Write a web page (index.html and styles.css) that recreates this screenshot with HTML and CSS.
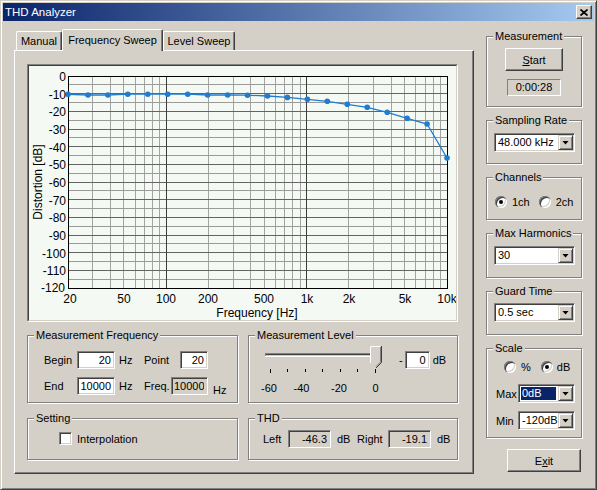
FILE: index.html
```html
<!DOCTYPE html>
<html lang="en">
<head>
  <meta charset="UTF-8" />
  <title>THD Analyzer</title>
  <link rel="stylesheet" href="styles.css">
</head>
<body>
  <div class="window">
    <div class="titlebar">
      <span class="title">THD Analyzer</span>
      <span class="close">
        <svg width="8" height="7" viewBox="0 0 8 7"><path d="M0.5 0.5L7.5 6.5M7.5 0.5L0.5 6.5" stroke="#000" stroke-width="1.7"/></svg>
      </span>
    </div>

    <div class="client">
      <div class="main">
        <div class="tabs">
          <div class="tab tab-manual">Manual</div>
          <div class="tab tab-freq active">Frequency Sweep</div>
          <div class="tab tab-level">Level Sweep</div>
        </div>

        <div class="panel">
          <div class="chart">
            <svg class="plot" width="427" height="254" viewBox="29 66 427 254">
              <g shape-rendering="crispEdges" fill="none">
                <path class="grid-v" d="M92.5 76V288M110.5 76V288M123.5 76V288M135.5 76V288M144.5 76V288M152.5 76V288M159.5 76V288M208.5 76V288M233.5 76V288M250.5 76V288M264.5 76V288M275.5 76V288M284.5 76V288M292.5 76V288M300.5 76V288M348.5 76V288M373.5 76V288M391.5 76V288M404.5 76V288M415.5 76V288M425.5 76V288M433.5 76V288M440.5 76V288"/>
                <path class="grid-minor" d="M68 84.5H447M68 102.5H447M68 120.5H447M68 137.5H447M68 155.5H447M68 173.5H447M68 190.5H447M68 208.5H447M68 226.5H447M68 243.5H447M68 261.5H447M68 279.5H447"/>
                <path class="grid-major" d="M68 93.5H447M68 111.5H447M68 129.5H447M68 146.5H447M68 164.5H447M68 182.5H447M68 199.5H447M68 217.5H447M68 235.5H447M68 252.5H447M68 270.5H447"/>
                <path class="grid-decade" d="M166.5 76V288M306.5 76V288"/>
                <rect class="frame" x="68.5" y="76.5" width="379" height="212"/>
              </g>

              <polyline class="curve" points="68,94.3 88,95 107.9,95 127.8,94.2 147.8,94.2 167.7,94.2 187.7,94.2 207.6,95 227.6,95 247.5,95.2 267.5,96 287.4,97.4 307.4,99.3 327.3,101.3 347.3,104.3 367.2,107.3 387.2,112.3 407.1,118.3 427.1,124 447,158"/>
              <g class="dots">
                <circle cx="68" cy="94.3" r="2.8"/><circle cx="88" cy="95" r="2.8"/>
                <circle cx="107.9" cy="95" r="2.8"/><circle cx="127.8" cy="94.2" r="2.8"/>
                <circle cx="147.8" cy="94.2" r="2.8"/><circle cx="167.7" cy="94.2" r="2.8"/>
                <circle cx="187.7" cy="94.2" r="2.8"/><circle cx="207.6" cy="95" r="2.8"/>
                <circle cx="227.6" cy="95" r="2.8"/><circle cx="247.5" cy="95.2" r="2.8"/>
                <circle cx="267.5" cy="96" r="2.8"/><circle cx="287.4" cy="97.4" r="2.8"/>
                <circle cx="307.4" cy="99.3" r="2.8"/><circle cx="327.3" cy="101.3" r="2.8"/>
                <circle cx="347.3" cy="104.3" r="2.8"/><circle cx="367.2" cy="107.3" r="2.8"/>
                <circle cx="387.2" cy="112.3" r="2.8"/><circle cx="407.1" cy="118.3" r="2.8"/>
                <circle cx="427.1" cy="124" r="2.8"/><circle cx="447" cy="158" r="2.8"/>
              </g>

              <g class="ylabels" text-anchor="end">
                <text x="66" y="81">0</text>
                <text x="66" y="98.7">-10</text>
                <text x="66" y="116.3">-20</text>
                <text x="66" y="134">-30</text>
                <text x="66" y="151.7">-40</text>
                <text x="66" y="169.3">-50</text>
                <text x="66" y="187">-60</text>
                <text x="66" y="204.7">-70</text>
                <text x="66" y="222.3">-80</text>
                <text x="66" y="240">-90</text>
                <text x="66" y="257.7">-100</text>
                <text x="66" y="275.3">-110</text>
                <text x="65" y="292">-120</text>
              </g>
              <g class="xlabels" text-anchor="middle">
                <text x="70" y="303">20</text>
                <text x="124" y="302.5">50</text>
                <text x="166" y="302.5">100</text>
                <text x="208" y="302.5">200</text>
                <text x="264" y="302.5">500</text>
                <text x="307" y="302.5">1k</text>
                <text x="349" y="302.5">2k</text>
                <text x="405" y="302.5">5k</text>
                <text x="447" y="302.5">10k</text>
              </g>
              <text class="axis-title" x="257" y="317" text-anchor="middle">Frequency [Hz]</text>
              <text class="axis-title" transform="translate(41.5 182) rotate(-90)" text-anchor="middle">Distortion [dB]</text>
            </svg>
          </div>

          <div class="groups">
            <div class="group">
              <div class="group-title">Measurement Frequency</div>
              <div class="freq-rows">
                <div class="row">
                  <span class="lbl lbl-begin">Begin</span>
                  <input class="field f-hz" value="20">
                  <span class="unit">Hz</span>
                  <span class="lbl lbl-point">Point</span>
                  <input class="field f-point" value="20">
                </div>
                <div class="row">
                  <span class="lbl lbl-begin">End</span>
                  <input class="field f-hz" value="10000">
                  <span class="unit">Hz</span>
                  <span class="lbl lbl-freq">Freq.</span>
                  <input class="field readonly f-freq" value="10000" readonly>
                  <span class="unit-low">Hz</span>
                </div>
              </div>
            </div>

            <div class="group">
              <div class="group-title">Measurement Level</div>
              <div class="level-row">
                <svg class="slider" width="132" height="50" viewBox="258 344 132 50">
                  <g shape-rendering="crispEdges">
                    <path d="M265 353.5H380M265 353.5V357" stroke="#808080"/>
                    <path d="M266 354.5H379" stroke="#404040"/>
                    <path d="M266 355.5H379" stroke="#d4d0c8"/>
                    <path d="M265 356.5H380M380.5 353V357" stroke="#fff"/>
                    <path d="M270.5 369V373M287.5 369V372M305.5 369V372M322.5 369V372M340.5 369V372M357.5 369V372M375.5 369V373" stroke="#000"/>
                  </g>
                  <polygon points="370,346 381,346 381,362 376,367 370,362" fill="#d4d0c8"/>
                  <path d="M370.5 363V346.5H380.5" stroke="#fff" fill="none"/>
                  <path d="M381.5 346V362.5L376 368" stroke="#404040" fill="none"/>
                  <path d="M380.5 347V362L376 366.5" stroke="#808080" fill="none"/>
                  <g class="ticklabels">
                    <text x="261" y="392">-60</text>
                    <text x="293.5" y="392">-40</text>
                    <text x="331" y="392">-20</text>
                    <text x="372.5" y="392">0</text>
                  </g>
                </svg>
                <span class="level-minus">-</span>
                <input class="field f-level" value="0">
                <span class="level-unit">dB</span>
              </div>
            </div>

            <div class="group">
              <div class="group-title">Setting</div>
              <div class="check-row">
                <span class="checkbox"></span>
                <span class="check-label">Interpolation</span>
              </div>
            </div>

            <div class="group">
              <div class="group-title">THD</div>
              <div class="row thd-row">
                <span class="lbl lbl-left">Left</span>
                <input class="field readonly f-thd" value="-46.3" readonly>
                <span class="unit unit-thd">dB</span>
                <span class="lbl lbl-right">Right</span>
                <input class="field readonly f-thd" value="-19.1" readonly>
                <span class="unit unit-thd">dB</span>
              </div>
            </div>
          </div>
        </div>
      </div>

      <div class="side">
        <div class="group g-meas">
          <div class="group-title">Measurement</div>
          <div class="btn btn-start"><span><u>S</u>tart</span></div>
          <div class="static time">0:00:28</div>
        </div>

        <div class="group g-rate">
          <div class="group-title">Sampling Rate</div>
          <div class="combo combo-wide"><span class="combo-text">48.000 kHz</span><span class="combo-btn"></span></div>
        </div>

        <div class="group g-ch">
          <div class="group-title">Channels</div>
          <div class="radio-row">
            <span class="radio on"></span><span class="radio-label">1ch</span>
            <span class="radio radio-2"></span><span class="radio-label">2ch</span>
          </div>
        </div>

        <div class="group g-harm">
          <div class="group-title">Max Harmonics</div>
          <div class="combo combo-wide"><span class="combo-text">30</span><span class="combo-btn"></span></div>
        </div>

        <div class="group g-guard">
          <div class="group-title">Guard Time</div>
          <div class="combo combo-wide combo-guard"><span class="combo-text">0.5 sec</span><span class="combo-btn"></span></div>
        </div>

        <div class="group g-scale">
          <div class="group-title">Scale</div>
          <div class="radio-row scale-radios">
            <span class="radio"></span><span class="radio-label">%</span>
            <span class="radio on radio-db"></span><span class="radio-label radio-label-db">dB</span>
          </div>
          <div class="scale-row scale-max">
            <span class="scale-lbl">Max</span>
            <div class="combo combo-small"><span class="combo-text sel">0dB</span><span class="combo-btn"></span></div>
          </div>
          <div class="scale-row scale-min">
            <span class="scale-lbl">Min</span>
            <div class="combo combo-small"><span class="combo-text">-120dB</span><span class="combo-btn"></span></div>
          </div>
        </div>

        <div class="btn btn-exit"><span>E<u>x</u>it</span></div>
      </div>
    </div>
  </div>
</body>
</html>
```

FILE: styles.css
```css
* {
  box-sizing: border-box;
}

body {
  margin: 0;
  font: 11px "Liberation Sans", Arial, sans-serif;
  color: #000;
  background: #d4d0c8;
}

.window {
  width: 597px;
  height: 490px;
  padding: 2px;
  background: #d4d0c8;
  border: 1px solid;
  border-color: #d4d0c8 #404040 #404040 #d4d0c8;
  box-shadow: inset 1px 1px #fff, inset -1px -1px #808080;
}

/* title bar */
.titlebar {
  height: 18px;
  display: flex;
  align-items: center;
  justify-content: space-between;
  padding: 0 2px;
  background: linear-gradient(to right, #0a246a, #a6caf0);
  color: #fff;
}

.title {
  font-size: 11.5px;
  line-height: 18px;
}

.close {
  width: 16px;
  height: 14px;
  display: flex;
  align-items: center;
  justify-content: center;
  background: #d4d0c8;
  border: 1px solid;
  border-color: #fff #404040 #404040 #fff;
  box-shadow: inset -1px -1px #808080;
}

.client {
  display: flex;
  gap: 12px;
  padding: 8px 0 0 11px;
}

/* tabs */
.main {
  width: 460px;
}

.tabs {
  display: flex;
  align-items: flex-end;
  height: 21px;
  padding-left: 2px;
}

.tab {
  height: 19px;
  padding-top: 1px;
  line-height: 17px;
  text-align: center;
  border: 1px solid;
  border-bottom: 0;
  border-color: #fff #404040 transparent #fff;
  border-radius: 2px 2px 0 0;
  box-shadow: inset -1px 0 #808080;
}

.tab-manual { width: 46px; }
.tab-freq { width: 101px; }
.tab-level { width: 72px; }

.tab.active {
  height: 22px;
  padding-top: 0;
  line-height: 20px;
  margin-bottom: -1px;
  position: relative;
  z-index: 1;
  background: #d4d0c8;
}

.panel {
  height: 424px;
  padding: 13px 0 0 12px;
  border: 1px solid;
  border-color: #fff #404040 #404040 #fff;
  box-shadow: inset -1px -1px #808080;
}

/* chart */
.chart {
  width: 431px;
  height: 258px;
  border: 1px solid;
  border-color: #808080 #fff #fff #808080;
}

.plot {
  display: block;
  box-sizing: content-box;
  border: 1px solid;
  border-color: #404040 #d4d0c8 #d4d0c8 #404040;
  background: #f5f9f3;
}

.grid-v { stroke: #a4a4a4; }
.grid-minor { stroke: #9a9a9a; }
.grid-major { stroke: #646464; }
.grid-decade { stroke: #3c3c3c; }
.frame { stroke: #000; fill: none; }

.curve {
  fill: none;
  stroke: #1f7cd0;
  stroke-width: 1.3;
}

.dots { fill: #1f7cd0; }

.plot text {
  font: 12px "Liberation Sans", Arial, sans-serif;
  fill: #000;
}

/* group boxes */
.groups {
  display: grid;
  grid-template-columns: 211px 210px;
  grid-template-rows: 68px 42px;
  column-gap: 10px;
  row-gap: 15px;
  margin-top: 13px;
}

.group {
  display: flex;
  flex-direction: column;
  border: 1px solid #808080;
  box-shadow: inset 1px 1px #fff, 1px 1px #fff;
}

.group-title {
  align-self: flex-start;
  margin: -7px 0 0 6px;
  padding: 0 2px;
  line-height: 13px;
  background: #d4d0c8;
}

.row {
  display: flex;
  align-items: center;
  height: 18px;
}

.freq-rows {
  display: flex;
  flex-direction: column;
  gap: 8px;
  margin-top: 9px;
  padding-left: 16px;
}

.lbl-begin { width: 33px; }
.lbl-point { width: 36px; }
.lbl-freq { width: 27px; }
.lbl-left { width: 25px; }
.lbl-right { width: 31px; }

.unit {
  width: 29px;
  padding-left: 4px;
}

.unit-thd {
  width: 26px;
  padding-left: 6px;
}

.unit-low {
  align-self: flex-end;
  margin: 0 0 -1px 5px;
}

.field {
  height: 18px;
  margin: 0;
  padding: 0 3px 0 2px;
  font: inherit;
  color: #000;
  text-align: right;
  background: #fff;
  border: 1px solid;
  border-color: #808080 #fff #fff #808080;
  box-shadow: inset 1px 1px #404040, inset -1px -1px #d4d0c8;
  outline: none;
}

.field.readonly {
  background: #d4d0c8;
}

.f-hz { width: 38px; }
.f-point { width: 28px; }
.f-freq { width: 37px; }
.f-thd { width: 43px; }
.f-level { width: 25px; margin-left: 2px; }

.static {
  border: 1px solid;
  border-color: #808080 #fff #fff #808080;
  background: #d4d0c8;
}

/* level slider */
.level-row {
  display: flex;
  align-items: flex-start;
  margin-top: 2px;
}

.slider {
  display: block;
  margin-left: 9px;
}

.slider text {
  font: 11px "Liberation Sans", Arial, sans-serif;
  fill: #000;
}

.level-minus {
  margin: 7px 0 0 9px;
  line-height: 18px;
}

.level-row .field {
  margin-top: 7px;
}

.level-unit {
  margin: 7px 0 0 3px;
  line-height: 18px;
}

.check-row {
  display: flex;
  align-items: center;
  margin-top: 7px;
  padding-left: 31px;
}

.checkbox {
  width: 13px;
  height: 13px;
  background: #fff;
  border: 1px solid;
  border-color: #808080 #fff #fff #808080;
  box-shadow: inset 1px 1px #404040, inset -1px -1px #d4d0c8;
}

.check-label {
  margin-left: 5px;
}

.thd-row {
  margin-top: 5px;
  padding-left: 14px;
}

/* right column */
.side {
  width: 96px;
  display: flex;
  flex-direction: column;
  gap: 13px;
  margin-top: 7px;
}

.g-meas { height: 71px; }
.g-rate { height: 44px; }
.g-ch { height: 43px; }
.g-harm { height: 45px; }
.g-guard { height: 44px; }
.g-scale { height: 90px; }

.btn {
  display: flex;
  align-items: center;
  justify-content: center;
  height: 23px;
  background: #d4d0c8;
  border: 1px solid;
  border-color: #fff #404040 #404040 #fff;
  box-shadow: inset -1px -1px #808080;
}

.btn-start {
  width: 58px;
  align-self: center;
  margin-top: 5px;
}

.btn-exit {
  width: 74px;
  align-self: flex-end;
  margin-right: 1px;
  margin-top: -2px;
}

.time {
  width: 54px;
  height: 17px;
  align-self: center;
  margin-top: 8px;
  line-height: 15px;
  text-align: center;
}

.combo {
  display: flex;
  height: 19px;
  padding: 1px;
  background: #fff;
  border: 1px solid;
  border-color: #808080 #fff #fff #808080;
  box-shadow: inset 1px 1px #404040, inset -1px -1px #d4d0c8;
}

.combo-wide {
  width: 81px;
  margin: 6px 0 0 7px;
}

.combo-guard {
  margin-top: 5px;
}

.combo-small {
  width: 57px;
}

.combo-text {
  flex: 1;
  line-height: 15px;
  padding-left: 2px;
  white-space: nowrap;
  overflow: hidden;
}

.combo-text.sel {
  margin: 1px 2px 1px 1px;
  padding-left: 1px;
  line-height: 13px;
  background: #0a246a;
  color: #fff;
}

.combo-btn {
  width: 15px;
  display: flex;
  align-items: center;
  justify-content: center;
  background: #d4d0c8;
  border: 1px solid;
  border-color: #d4d0c8 #404040 #404040 #d4d0c8;
  box-shadow: inset 1px 1px #fff, inset -1px -1px #808080;
}

.combo-btn::after {
  content: "";
  width: 7px;
  height: 4px;
  background: #000;
  clip-path: polygon(0 0, 100% 0, 50% 100%);
}

.radio-row {
  display: flex;
  align-items: center;
  height: 12px;
  margin-top: 12px;
  padding-left: 8px;
}

.radio {
  position: relative;
  flex: none;
  width: 12px;
  height: 12px;
  border-radius: 50%;
  background: #fff;
  box-shadow: inset 1px 1px #808080, inset 2px 2px #404040, inset -1px -1px #fff, inset -2px -2px #d4d0c8;
}

.radio.on::after {
  content: "";
  position: absolute;
  left: 4px;
  top: 4px;
  width: 4px;
  height: 4px;
  border-radius: 50%;
  background: #000;
}

.radio-label {
  margin-left: 5px;
}

.radio-2 {
  margin-left: 9px;
}

.scale-radios {
  margin-top: 6px;
  padding-left: 17px;
}

.radio-db {
  margin-left: 10px;
}

.radio-label-db {
  margin-left: 4px;
}

.scale-row {
  display: flex;
  align-items: center;
  padding-left: 9px;
}

.scale-max { margin-top: 11px; }
.scale-min { margin-top: 8px; }

.scale-lbl {
  width: 22px;
}
```
